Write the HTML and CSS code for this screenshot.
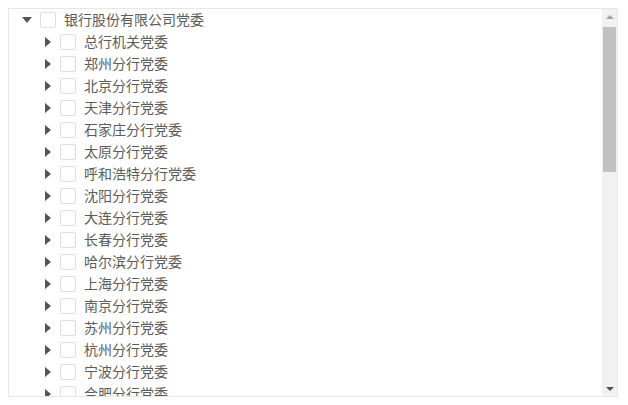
FILE: index.html
```html
<!DOCTYPE html>
<html lang="zh-CN">
<head>
<meta charset="utf-8">
<title>党委树</title>
<link rel="stylesheet" href="styles.css">
</head>
<body>
<div class="panel">
  <div class="tree">
    <div class="row lvl0"><span class="toggle"><span class="caret-down"></span></span><span class="cb"></span><span class="label">银行股份有限公司党委</span></div>
    <div class="row lvl1"><span class="toggle"><span class="caret-right"></span></span><span class="cb"></span><span class="label">总行机关党委</span></div>
    <div class="row lvl1"><span class="toggle"><span class="caret-right"></span></span><span class="cb"></span><span class="label">郑州分行党委</span></div>
    <div class="row lvl1"><span class="toggle"><span class="caret-right"></span></span><span class="cb"></span><span class="label">北京分行党委</span></div>
    <div class="row lvl1"><span class="toggle"><span class="caret-right"></span></span><span class="cb"></span><span class="label">天津分行党委</span></div>
    <div class="row lvl1"><span class="toggle"><span class="caret-right"></span></span><span class="cb"></span><span class="label">石家庄分行党委</span></div>
    <div class="row lvl1"><span class="toggle"><span class="caret-right"></span></span><span class="cb"></span><span class="label">太原分行党委</span></div>
    <div class="row lvl1"><span class="toggle"><span class="caret-right"></span></span><span class="cb"></span><span class="label">呼和浩特分行党委</span></div>
    <div class="row lvl1"><span class="toggle"><span class="caret-right"></span></span><span class="cb"></span><span class="label">沈阳分行党委</span></div>
    <div class="row lvl1"><span class="toggle"><span class="caret-right"></span></span><span class="cb"></span><span class="label">大连分行党委</span></div>
    <div class="row lvl1"><span class="toggle"><span class="caret-right"></span></span><span class="cb"></span><span class="label">长春分行党委</span></div>
    <div class="row lvl1"><span class="toggle"><span class="caret-right"></span></span><span class="cb"></span><span class="label">哈尔滨分行党委</span></div>
    <div class="row lvl1"><span class="toggle"><span class="caret-right"></span></span><span class="cb"></span><span class="label">上海分行党委</span></div>
    <div class="row lvl1"><span class="toggle"><span class="caret-right"></span></span><span class="cb"></span><span class="label">南京分行党委</span></div>
    <div class="row lvl1"><span class="toggle"><span class="caret-right"></span></span><span class="cb"></span><span class="label">苏州分行党委</span></div>
    <div class="row lvl1"><span class="toggle"><span class="caret-right"></span></span><span class="cb"></span><span class="label">杭州分行党委</span></div>
    <div class="row lvl1"><span class="toggle"><span class="caret-right"></span></span><span class="cb"></span><span class="label">宁波分行党委</span></div>
    <div class="row lvl1"><span class="toggle"><span class="caret-right"></span></span><span class="cb"></span><span class="label">合肥分行党委</span></div>
    <div class="row lvl1"><span class="toggle"><span class="caret-right"></span></span><span class="cb"></span><span class="label">福州分行党委</span></div>
    <div class="row lvl1"><span class="toggle"><span class="caret-right"></span></span><span class="cb"></span><span class="label">厦门分行党委</span></div>
  </div>
  <div class="scrollbar">
    <div class="sb-btn"><span class="arrow-up"></span></div>
    <div class="sb-track"><div class="sb-thumb"></div></div>
    <div class="sb-btn"><span class="arrow-down"></span></div>
  </div>
</div>
</body>
</html>
```

FILE: styles.css
```css
html, body {
  margin: 0;
  padding: 0;
  background: #fff;
}
body {
  padding: 8px;
  font-family: "Noto Sans CJK SC", "Noto Sans", sans-serif;
}
.panel {
  width: 610px;
  height: 389px;
  box-sizing: border-box;
  border: 1px solid #e6e6e6;
  background: #fff;
  display: flex;
}
.tree {
  flex: 1;
  overflow: hidden;
}
.row {
  height: 22px;
  display: flex;
  align-items: center;
  font-size: 14px;
  color: #5c5c5c;
  white-space: nowrap;
}
.lvl0 { padding-left: 8px; }
.lvl1 { padding-left: 28px; }
.toggle {
  width: 20px;
  height: 22px;
  margin-right: 3px;
  display: flex;
  align-items: center;
  justify-content: center;
}
.caret-down {
  width: 0;
  height: 0;
  border-left: 5px solid transparent;
  border-right: 5px solid transparent;
  border-top: 6px solid #555;
}
.caret-right {
  width: 0;
  height: 0;
  border-top: 5px solid transparent;
  border-bottom: 5px solid transparent;
  border-left: 6px solid #555;
  margin-left: 1px;
}
.cb {
  width: 16px;
  height: 16px;
  box-sizing: border-box;
  border: 1px solid #dedede;
  border-radius: 2px;
  background: #fff;
  margin-right: 8px;
}
.label {
  line-height: 20px;
  padding-bottom: 2px;
}
.scrollbar {
  width: 15px;
  background: #f1f1f1;
  display: flex;
  flex-direction: column;
}
.sb-btn {
  height: 15px;
  display: flex;
  align-items: center;
  justify-content: center;
}
.arrow-up {
  width: 0;
  height: 0;
  border-left: 4px solid transparent;
  border-right: 4px solid transparent;
  border-bottom: 4px solid #a3a3a3;
}
.arrow-down {
  width: 0;
  height: 0;
  border-left: 4px solid transparent;
  border-right: 4px solid transparent;
  border-top: 4px solid #505050;
}
.sb-track {
  flex: 1;
  padding: 3px 1px 0;
}
.sb-thumb {
  height: 145px;
  background: #c1c1c1;
}
```
